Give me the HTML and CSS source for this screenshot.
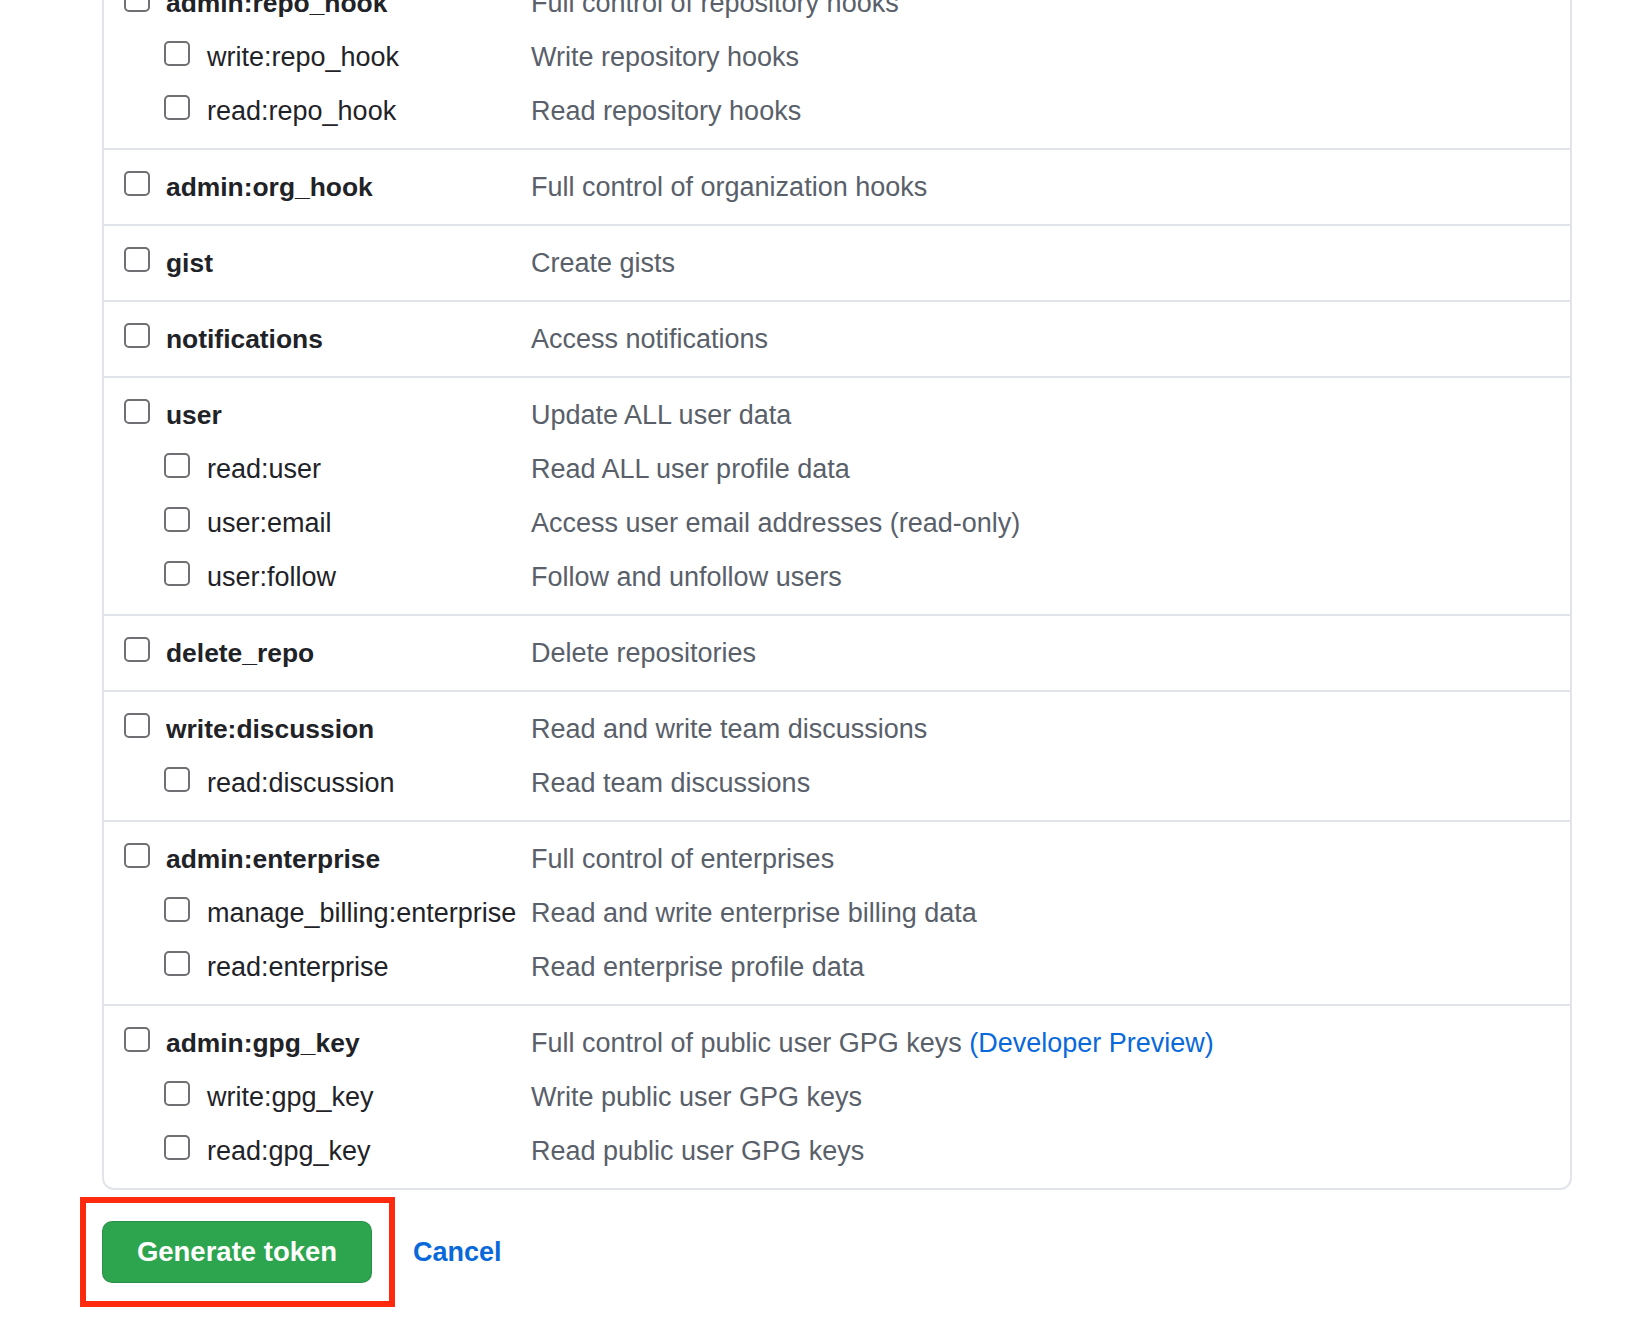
FILE: index.html
```html
<!DOCTYPE html>
<html lang="en">
<head>
<meta charset="utf-8">
<title>New personal access token – scopes</title>
<link rel="stylesheet" href="styles.css">
</head>
<body>
<div class="page">
  <div class="scopes">
    <div class="section">
      <div class="row"><div class="key"><span class="cb"></span><span class="name">admin:repo_hook</span></div><div class="desc">Full control of repository hooks</div></div>
      <div class="row sub"><div class="key"><span class="cb"></span><span class="name">write:repo_hook</span></div><div class="desc">Write repository hooks</div></div>
      <div class="row sub"><div class="key"><span class="cb"></span><span class="name">read:repo_hook</span></div><div class="desc">Read repository hooks</div></div>
    </div>
    <div class="section">
      <div class="row"><div class="key"><span class="cb"></span><span class="name">admin:org_hook</span></div><div class="desc">Full control of organization hooks</div></div>
    </div>
    <div class="section">
      <div class="row"><div class="key"><span class="cb"></span><span class="name">gist</span></div><div class="desc">Create gists</div></div>
    </div>
    <div class="section">
      <div class="row"><div class="key"><span class="cb"></span><span class="name">notifications</span></div><div class="desc">Access notifications</div></div>
    </div>
    <div class="section">
      <div class="row"><div class="key"><span class="cb"></span><span class="name">user</span></div><div class="desc">Update ALL user data</div></div>
      <div class="row sub"><div class="key"><span class="cb"></span><span class="name">read:user</span></div><div class="desc">Read ALL user profile data</div></div>
      <div class="row sub"><div class="key"><span class="cb"></span><span class="name">user:email</span></div><div class="desc">Access user email addresses (read-only)</div></div>
      <div class="row sub"><div class="key"><span class="cb"></span><span class="name">user:follow</span></div><div class="desc">Follow and unfollow users</div></div>
    </div>
    <div class="section">
      <div class="row"><div class="key"><span class="cb"></span><span class="name">delete_repo</span></div><div class="desc">Delete repositories</div></div>
    </div>
    <div class="section">
      <div class="row"><div class="key"><span class="cb"></span><span class="name">write:discussion</span></div><div class="desc">Read and write team discussions</div></div>
      <div class="row sub"><div class="key"><span class="cb"></span><span class="name">read:discussion</span></div><div class="desc">Read team discussions</div></div>
    </div>
    <div class="section">
      <div class="row"><div class="key"><span class="cb"></span><span class="name">admin:enterprise</span></div><div class="desc">Full control of enterprises</div></div>
      <div class="row sub"><div class="key"><span class="cb"></span><span class="name">manage_billing:enterprise</span></div><div class="desc">Read and write enterprise billing data</div></div>
      <div class="row sub"><div class="key"><span class="cb"></span><span class="name">read:enterprise</span></div><div class="desc">Read enterprise profile data</div></div>
    </div>
    <div class="section">
      <div class="row"><div class="key"><span class="cb"></span><span class="name">admin:gpg_key</span></div><div class="desc">Full control of public user GPG keys <a class="link" href="#">(Developer Preview)</a></div></div>
      <div class="row sub"><div class="key"><span class="cb"></span><span class="name">write:gpg_key</span></div><div class="desc">Write public user GPG keys</div></div>
      <div class="row sub"><div class="key"><span class="cb"></span><span class="name">read:gpg_key</span></div><div class="desc">Read public user GPG keys</div></div>
    </div>
  </div>
  <div class="actions">
    <div class="highlight"><button class="btn-primary" type="button">Generate token</button></div>
    <a class="cancel" href="#">Cancel</a>
  </div>
</div>
</body>
</html>
```

FILE: styles.css
```css
* { box-sizing: border-box; }

html, body {
  margin: 0;
  padding: 0;
  background: #ffffff;
}

body {
  font-family: "Liberation Sans", Arial, sans-serif;
  font-size: 27px;
  color: #1f2328;
}

.page {
  padding: 0 0 80px 102px;
  width: 1572px;
}

.scopes {
  margin-top: -36px;
  border: 2px solid #e1e4e8;
  border-radius: 12px;
  background: #ffffff;
}

.section {
  padding: 10px 0 10px 20px;
  border-top: 2px solid #e1e4e8;
}

.section:first-child {
  border-top: none;
}

.row {
  display: flex;
  align-items: flex-start;
  height: 54px;
  line-height: 54px;
}

.key {
  flex: 0 0 407px;
  display: flex;
  align-items: flex-start;
  gap: 16px;
}

.row.sub .key {
  padding-left: 40px;
  gap: 17px;
}

.cb {
  flex: 0 0 26px;
  width: 26px;
  height: 25px;
  margin-top: 11px;
  border: 2px solid #6e7074;
  border-radius: 5px;
  background: #ffffff;
}

.name {
  font-size: 26.4px;
  font-weight: 700;
  white-space: nowrap;
}

.row.sub .name {
  font-size: 27px;
  font-weight: 400;
}

.desc {
  color: #59606a;
  white-space: nowrap;
}

.link {
  color: #0969da;
  text-decoration: none;
}

.actions {
  display: flex;
  align-items: center;
  gap: 41px;
  margin-top: 31px;
}

.highlight {
  position: relative;
  display: flex;
}

.highlight::after {
  content: "";
  position: absolute;
  top: -24px;
  bottom: -24px;
  left: -22px;
  right: -23px;
  border: 6px solid #fd2a10;
  pointer-events: none;
}

.btn-primary {
  width: 270px;
  height: 62px;
  padding: 0;
  font-family: "Liberation Sans", Arial, sans-serif;
  font-size: 27.5px;
  font-weight: 700;
  color: #ffffff;
  background: #2da44e;
  border: 1px solid rgba(31, 35, 40, 0.15);
  border-radius: 10px;
  cursor: pointer;
}

.cancel {
  font-size: 27px;
  font-weight: 700;
  color: #0969da;
  text-decoration: none;
}
```
